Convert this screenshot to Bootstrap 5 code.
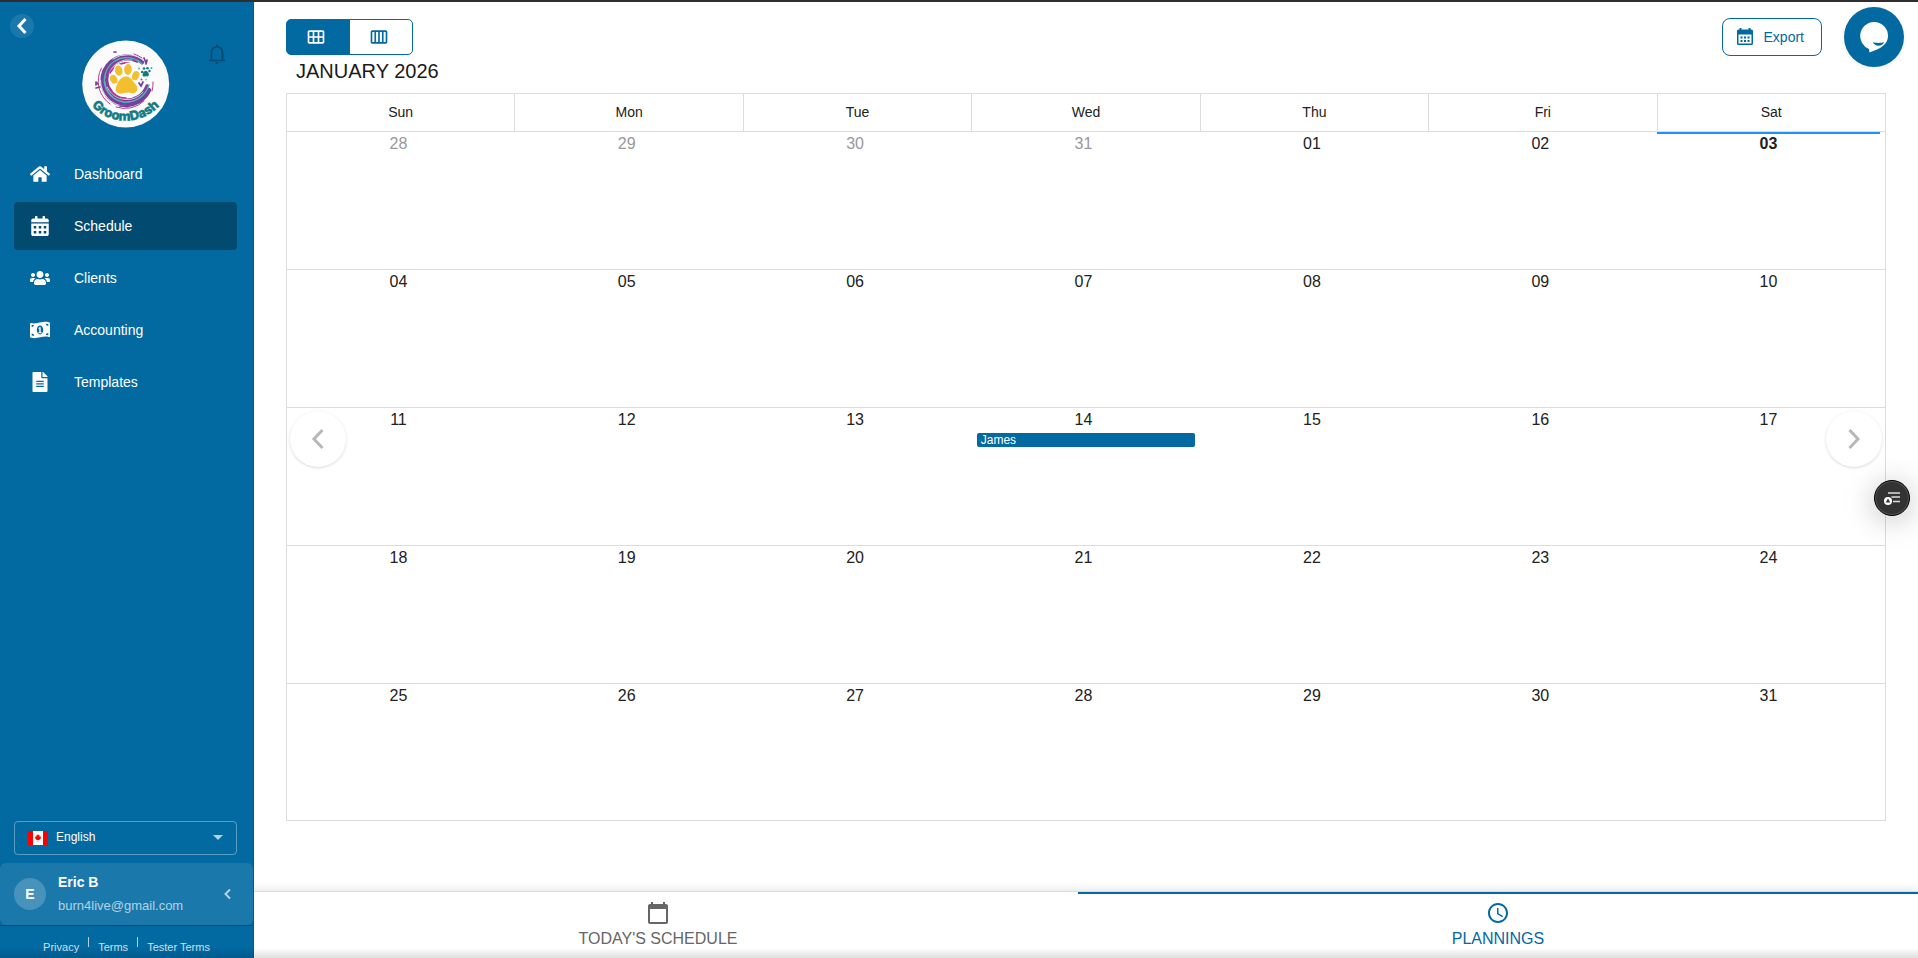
<!DOCTYPE html>
<html lang="en">
<head>
<meta charset="utf-8">
<meta name="viewport" content="width=device-width, initial-scale=1">
<title>GroomDash - Schedule</title>
<link href="https://cdn.jsdelivr.net/npm/bootstrap@5.3.0/dist/css/bootstrap.min.css" rel="stylesheet">
<style>
  :root { --brand: #0269a1; --brand-dark: #024a70; --line: #dcdcdc; }
  body { font-family: "Liberation Sans", Arial, sans-serif; font-size: 14px; line-height: 20px; color: #212121; border-top: 2px solid #302d30; }
  svg { display: block; }

  /* Sidebar */
  .side-panel { width: 254px; background: var(--brand); border-right: 1px solid #015a8b; color: #fff; z-index: 2; }
  .side-head { padding: 38px 1px 0 0; height: 148px; }
  .side-block { margin: 0 16px 0 14px; }
  .btn-collapse { left: 10px; top: 12px; width: 24px; height: 24px; background: rgba(255,255,255,.1); color: #fff; }
  .btn-bell { left: 205px; top: 40px; color: var(--brand-dark); }
  .side-link { height: 48px; padding: 0 16px; gap: 24px; border-radius: 4px; color: #fff; text-decoration: none; }
  .side-link:hover { color: #fff; }
  .side-link.active { background: var(--brand-dark); }
  .side-link svg { width: 20px; height: 20px; fill: currentColor; }
  .lang-box { height: 34px; padding: 0 12px 0 13px; border: 1px solid rgba(255,255,255,.35); border-radius: 4px; }
  .lang-box select { appearance: none; background: transparent; color: #fff; border: 0; font-size: 12px; padding: 0 0 2px; outline: 0; }
  .user-card { background: rgba(255,255,255,.1); border: 0; border-radius: 6px; color: #fff; padding: 0 16px 0 14px; height: 62px; gap: 12px; }
  .avatar { width: 32px; height: 32px; background: rgba(255,255,255,.2); }
  .user-mail { font-size: 13px; color: #b3d2e3; }
  .side-foot { border-top: 1px solid #014a72; height: 33px; padding-top: 11px; font-size: 11px; line-height: 20px; gap: 9px; }
  .side-foot a { color: #cce1ec; text-decoration: none; }
  .side-foot .rule { width: 1px; height: 10px; background: #b3d2e3; }

  /* Toolbar */
  .main-area { padding: 16px 32px 0; min-width: 0; }
  .view-btn { width: 64px; height: 36px; border: 1px solid var(--brand); color: var(--brand); border-radius: 5px; padding: 0 4px 0 0; }
  .view-btn.active { background: var(--brand); color: #fff; border-color: var(--brand); }
  .btn-export { height: 38px; padding: 0 17px 0 14px; gap: 11px; border: 1px solid var(--brand); border-radius: 8px; color: var(--brand); font-size: 14px; margin-right: 64px; }
  .month-title { font-size: 20px; line-height: 30px; font-weight: 400; margin: 0 0 7px; padding-left: 10px; color: #1a1a1a; }

  /* Calendar */
  .cal-grid { table-layout: fixed; border-collapse: collapse; border: 1px solid var(--line); }
  .cal-grid th { height: 38px; border: 1px solid var(--line); font-weight: 400; text-align: center; padding: 0 0 2px; }
  .cal-grid td { height: 138px; border-top: 1px solid var(--line); border-bottom: 1px solid var(--line); padding: 0 5px 0 0; vertical-align: top; }
  .cal-grid tr:last-child td { height: 137px; }
  .day-num { border-top: 2px solid transparent; font-size: 16px; line-height: 20px; text-align: center; }
  .day-num.other { color: #999; }
  .day-num.today { border-color: #1e90ff; font-weight: 700; }
  .event-bar { display: block; height: 14px; line-height: 14px; font-size: 12px; margin: 3px 0 0 5px; padding: 0 4px; border-radius: 2px; background: var(--brand); color: #fff; text-decoration: none; }
  .page-arrow { width: 56px; height: 56px; top: 318px; background: #fff; color: #b8b8b8; box-shadow: 0 1px 3px rgba(0,0,0,.15); border: 0; }
  .page-arrow.prev { left: 4px; }
  .page-arrow.next { right: 4px; }

  /* Bottom tabs */
  .tab-bar { margin: 0 -32px 0 -48px; height: 67px; border-top: 1px solid var(--line); box-shadow: 0 -2px 8px rgba(0,0,0,.1); background: #fff; }
  .tab-item { border: 0; border-top: 2px solid transparent; background: transparent; padding: 7px 0 0; font-size: 16px; line-height: 24px; color: #666; gap: 2px; }
  .tab-item.active { color: var(--brand); border-color: var(--brand); }
  .tab-item svg { width: 24px; height: 24px; fill: currentColor; }

  /* Floating widgets */
  .chat-btn { top: 7px; right: 14px; width: 60px; height: 60px; background: var(--brand); box-shadow: 0 1px 4px rgba(0,0,0,.08); }
  .reader-btn { top: 480px; right: 8px; width: 36px; height: 36px; background: #333; border: 1px solid #000; box-shadow: 0 4px 30px rgba(0,0,0,.25), inset 0 0 0 1px #555; }
  .edge-fade { height: 10px; background: linear-gradient(transparent, rgba(0,0,0,.13)); pointer-events: none; }
</style>
</head>
<body class="d-flex min-vh-100">

<aside class="side-panel d-flex flex-column flex-shrink-0 position-relative">
  <button class="btn-collapse position-absolute border-0 rounded-circle p-0 d-flex align-items-center justify-content-center" aria-label="Collapse menu">
    <svg width="24" height="24" fill="none" stroke="currentColor" stroke-width="3"><path d="M15.500 5L9 12l6.500 7"/></svg>
  </button>
  <button class="btn-bell position-absolute border-0 bg-transparent p-0" aria-label="Notifications">
    <svg width="24" height="24" fill="none" stroke="currentColor" stroke-width="1.600"><path d="M4 18.500h16M6.500 18V10.500a5.500 5.800 0 0 1 11 0V18M12 4.700V2.500"/><path d="M10 20.500h4c-.5 1.500-3.500 1.500-4 0z" fill="currentColor" stroke="none"/></svg>
  </button>
  <div class="side-head d-flex justify-content-center">
    <svg width="88" height="88" viewBox="0 0 88 88" role="img" aria-label="GroomDash logo">
      <circle cx="43.700" cy="44" r="43.500" fill="#fbfbfc"/>
      <g fill="none" stroke-linecap="round">
        <path d="M19.500 28A27.500 27.500 0 0 0 28 64M60 18A27 27 0 0 0 52 14M34 67A27.500 27.500 0 0 0 62 61M70 51A27 27 0 0 0 71 42" stroke="#c4388f" stroke-width="1"/>
        <path d="M60 22A24 24 0 0 0 21 36A24 24 0 0 0 42 64.500A25 25 0 0 0 67 50" stroke="#74429b" stroke-width="4.500"/>
        <path d="M55 21A21 21 0 0 0 25 36A21 21 0 0 0 41 60A22 22 0 0 0 65 46" stroke="#8a3d98" stroke-width="3.500"/>
        <path d="M62 21A25 25 0 0 0 31 19M18.500 40A26 26 0 0 0 44 66.500" stroke="#fbfbfc" stroke-width=".8"/>
        <path d="M60 24A22 22 0 0 0 23 35A22 22 0 0 0 41 62A24 24 0 0 0 67 45" stroke="#4fb2b6" stroke-width="1.400"/>
        <path d="M50 20A20 20 0 0 0 27 34M25 47A21 21 0 0 0 43 59.500A21 21 0 0 0 61 52" stroke="#b5dfe4" stroke-width=".9"/>
        <path d="M47 23A19 19 0 0 0 28 33M28 48A18 18 0 0 0 44 58" stroke="#bd3590" stroke-width="1.600"/>
        <path d="M62 18l2 5M65 20l-1 4M14 42l2 2M14 48l4-1M14 42v3M57 43l2 3 2-4M32 12l2 0M38 66l8 .6" stroke="#71409b" stroke-width="1.700"/>
      </g>
      <g fill="#fbfbfc" stroke="#fbfbfc" stroke-width="3">
        <ellipse cx="36.700" cy="30.700" rx="3.700" ry="5.200"/><ellipse cx="46" cy="29.500" rx="3.800" ry="5.400"/><ellipse cx="31.700" cy="39.300" rx="3.500" ry="4.600"/><ellipse cx="53.600" cy="35.700" rx="3.400" ry="4.700"/>
        <path d="M43 36.500c5-.8 7 3.500 9.500 6.500 3 3 4 6.500 1.500 9s-5 .5-8.500.5-7 2.500-10 .3-1.800-5.500-.5-8.300 3.500-7.300 8-8z"/>
        <circle cx="63.500" cy="32" r="3.500"/>
      </g>
      <g fill="#f3bf2e">
        <ellipse cx="36.700" cy="30.700" rx="3.700" ry="5.200" transform="rotate(-12 36.700 30.700)"/>
        <ellipse cx="46" cy="29.500" rx="3.800" ry="5.400" transform="rotate(5 46 29.500)"/>
        <ellipse cx="31.700" cy="39.300" rx="3.500" ry="4.600" transform="rotate(-28 31.700 39.300)"/>
        <ellipse cx="53.600" cy="35.700" rx="3.400" ry="4.700" transform="rotate(22 53.600 35.700)"/>
        <path d="M43 36.500c5-.8 7 3.500 9.500 6.500 3 3 4 6.500 1.500 9s-5 .5-8.500.5-7 2.500-10 .3-1.800-5.500-.5-8.300 3.500-7.300 8-8z"/>
      </g>
      <g fill="#127a83">
        <circle cx="60.200" cy="32" r="1.300"/><circle cx="62" cy="28.500" r="1.300"/><circle cx="65.500" cy="28.300" r="1.300"/><circle cx="67.500" cy="31" r="1.200"/>
        <path d="M63.500 30.800c2-.3 4 3 3.200 4.700s-2 .6-3 .8-2.500.6-3-.6 1-4.700 2.800-4.900z"/>
      </g>
      <g fill="#c4388f"><circle cx="59.500" cy="39.500" r="1"/><circle cx="43" cy="22.500" r=".8"/></g>
      <g fill="#2eb3a8"><circle cx="69.500" cy="28" r="1"/><circle cx="57" cy="28.500" r=".9"/><circle cx="64" cy="39.500" r=".7"/></g>
      <path id="logo-arc" d="M8 64A46 46 0 0 0 79 64" fill="none"/>
      <text font-family="Inter, sans-serif" font-size="13" font-weight="800" fill="#127a83" stroke="#127a83" stroke-width=".4" text-anchor="middle"><textPath href="#logo-arc" startOffset="50%">GroomDash</textPath></text>
    </svg>
  </div>

  <nav class="side-block d-flex flex-column gap-1">
    <a class="side-link d-flex align-items-center" href="#">
      <svg viewBox="0 0 576 512"><path d="M280.370 148.260L96 300.110V464a16 16 0 0 0 16 16l112.060-.29a16 16 0 0 0 15.920-16V368a16 16 0 0 1 16-16h64a16 16 0 0 1 16 16v95.640a16 16 0 0 0 16 16.050L464 480a16 16 0 0 0 16-16V300L295.670 148.260a12.190 12.190 0 0 0-15.300 0zM571.600 251.470L488 182.560V44.050a12 12 0 0 0-12-12h-56a12 12 0 0 0-12 12v72.610L318.470 43a48 48 0 0 0-61 0L4.340 251.470a12 12 0 0 0-1.600 16.900l25.500 31A12 12 0 0 0 45.150 301l235.220-193.740a12.190 12.190 0 0 1 15.300 0L530.900 301a12 12 0 0 0 16.900-1.600l25.500-31a12 12 0 0 0-1.700-16.930z"/></svg>
      <span>Dashboard</span>
    </a>
    <a class="side-link active d-flex align-items-center" href="#" aria-current="page">
      <svg viewBox="0 0 448 512"><path fill-rule="evenodd" d="M0 464c0 26.500 21.500 48 48 48h352c26.500 0 48-21.500 48-48V192H0zM64 256h64v64H64zM192 256h64v64h-64zM320 256h64v64h-64zM64 384h64v64H64zM192 384h64v64h-64zM320 384h64v64h-64zM400 64h-48V16c0-8.800-7.200-16-16-16h-32c-8.800 0-16 7.200-16 16v48H160V16c0-8.800-7.200-16-16-16h-32c-8.800 0-16 7.200-16 16v48H48C21.500 64 0 85.500 0 112v48h448v-48c0-26.500-21.500-48-48-48z"/></svg>
      <span>Schedule</span>
    </a>
    <a class="side-link d-flex align-items-center" href="#">
      <svg viewBox="0 0 640 512"><path d="M96 224c35.300 0 64-28.700 64-64s-28.700-64-64-64-64 28.700-64 64 28.700 64 64 64zm448 0c35.300 0 64-28.700 64-64s-28.700-64-64-64-64 28.700-64 64 28.700 64 64 64zm32 32h-64c-17.600 0-33.500 7.100-45.100 18.600 40.300 22.100 68.900 62 75.100 109.400h66c17.700 0 32-14.300 32-32v-32c0-35.300-28.700-64-64-64zm-256 0c61.900 0 112-50.100 112-112S381.900 32 320 32 208 82.100 208 144s50.100 112 112 112zm76.800 32h-8.300c-20.800 10-43.900 16-68.500 16s-47.600-6-68.500-16h-8.300C179.600 288 128 339.600 128 403.200V432c0 26.500 21.500 48 48 48h288c26.500 0 48-21.500 48-48v-28.800c0-63.600-51.600-115.200-115.200-115.200zm-223.700-13.400C161.500 263.100 145.600 256 128 256H64c-35.300 0-64 28.700-64 64v32c0 17.700 14.300 32 32 32h65.900c6.300-47.400 34.900-87.300 75.200-109.400z"/></svg>
      <span>Clients</span>
    </a>
    <a class="side-link d-flex align-items-center" href="#">
      <svg viewBox="0 0 20 20"><path fill-rule="evenodd" d="M0 3.800c0-.7.600-1 1.200-.8 5.800 1.800 11.500-2.600 17.800-.7.600.2 1 .6 1 1.200v12.700c0 .7-.6 1-1.200.8-5.800-1.800-11.500 2.600-17.800.7-.6-.2-1-.6-1-1.200zM10 5.600c-1.800 0-3.200 2-3.200 4.400s1.400 4.400 3.200 4.400 3.200-2 3.200-4.400-1.400-4.400-3.200-4.400zM1.700 5v2c1.200-.1 2.200-.8 2.500-1.800zM15.700 3.700c.2 1.300 1.300 2.100 2.600 2.100v-1.700zM1.700 13.500v1.900c.9.200 1.700.3 2.600.3-.1-1.200-1.200-2.200-2.600-2.200zM18.300 13c-1.300.1-2.400.9-2.500 2l2.500.2z"/><path d="M9.300 7.300h1.400V12h.8v1.200h-3V12h.8V8.800h-.8V7.900z"/></svg>
      <span>Accounting</span>
    </a>
    <a class="side-link d-flex align-items-center" href="#">
      <svg viewBox="0 0 384 512"><path fill-rule="evenodd" d="M224 136V0H24C10.700 0 0 10.700 0 24v464c0 13.300 10.700 24 24 24h336c13.300 0 24-10.700 24-24V160H248c-13.200 0-24-10.800-24-24zM96 224h192v32H96zM96 288h192v32H96zM96 352h192v32H96zM384 121.900v6.100H256V0h6.100c6.400 0 12.500 2.500 17 7l97.900 98c4.500 4.500 7 10.600 7 16.900z"/></svg>
      <span>Templates</span>
    </a>
  </nav>

  <div class="mt-auto">
    <div class="lang-box side-block d-flex align-items-center mb-2">
      <svg class="me-2" width="20" height="14" viewBox="0 0 20 14"><path fill="#fff" d="M0 0h20v14H0z"/><path fill="#f00" d="M0 0h5v14H0zM15 0h5v14h-5zM10 3l1 1.500.8-.3-.2 1.500 1.600-.2-.5 1 .5.500-1.700 1.500.2.500h-1.500V11h-.4V9H8.300l.2-.5L6.800 7l.5-.5-.5-1 1.600.2-.2-1.500.8.300z"/></svg>
      <select class="flex-grow-1" aria-label="Language"><option>English</option><option>Français</option></select>
      <svg width="12" height="6" fill="#b3d2e3"><path d="M1 0h10L6 5z"/></svg>
    </div>
    <button class="user-card w-100 d-flex align-items-center text-start">
      <span class="avatar rounded-circle d-flex align-items-center justify-content-center fw-bold">E</span>
      <span class="flex-grow-1 d-flex flex-column gap-1"><span class="fw-bold">Eric B</span><span class="user-mail">burn4live@gmail.com</span></span>
      <svg width="18" height="18" fill="none" stroke="#b3d2e3" stroke-width="2"><path d="M11 4.500L6.500 9l4.500 4.500"/></svg>
    </button>
    <div class="side-foot d-flex justify-content-center">
      <a href="#">Privacy</a><span class="rule"></span><a href="#">Terms</a><span class="rule"></span><a href="#">Tester Terms</a>
    </div>
  </div>
</aside>

<main class="main-area d-flex flex-column flex-grow-1">
  <div class="d-flex align-items-center justify-content-between">
    <div class="btn-group" role="group" aria-label="Calendar view">
      <button class="view-btn btn active d-flex align-items-center justify-content-center" aria-label="Month view">
        <svg width="20" height="20" viewBox="0 0 24 24" fill="currentColor"><path d="M20 4H4c-1.100 0-2 .9-2 2v12c0 1.100.9 2 2 2h16c1.100 0 2-.9 2-2V6c0-1.100-.9-2-2-2zM8 11H4V6h4v5zm6 0h-4V6h4v5zm6 0h-4V6h4v5zM8 18H4v-5h4v5zm6 0h-4v-5h4v5zm6 0h-4v-5h4v5z"/></svg>
      </button>
      <button class="view-btn btn d-flex align-items-center justify-content-center" aria-label="Week view">
        <svg width="20" height="20" viewBox="0 0 24 24" fill="currentColor"><path fill-rule="evenodd" d="M20 4H4c-1.100 0-2 .9-2 2v12c0 1.100.9 2 2 2h16c1.100 0 2-.9 2-2V6c0-1.100-.9-2-2-2zM13 6h2.500v12H13zM11 18H8.500V6H11zM4 6h2.500v12H4zM20 18h-2.500V6H20z"/></svg>
      </button>
    </div>
    <button class="btn btn-export d-flex align-items-center">
      <svg width="16" height="18" viewBox="0 0 16 18" fill="currentColor"><path fill-rule="evenodd" d="M2.500 0h2v1.500h7V0h2v1.500h1A1.500 1.500 0 0 1 16 3v12.500a1.500 1.500 0 0 1-1.500 1.500h-13A1.500 1.500 0 0 1 0 15.500V3a1.500 1.500 0 0 1 1.500-1.500h1zM1.500 6.500v9h13v-9z"/><path d="M3.500 8.500h2v2h-2zM7 8.500h2v2H7zM10.500 8.500h2v2h-2zM3.500 12h2v2h-2zM7 12h2v2H7zM10.500 12h2v2h-2z"/></svg>
      Export
    </button>
  </div>
  <h1 class="month-title">JANUARY 2026</h1>

  <div class="position-relative mb-5">
    <table class="cal-grid w-100">
      <thead><tr><th>Sun</th><th>Mon</th><th>Tue</th><th>Wed</th><th>Thu</th><th>Fri</th><th>Sat</th></tr></thead>
      <tbody>
        <tr><td><div class="day-num other">28</div></td><td><div class="day-num other">29</div></td><td><div class="day-num other">30</div></td><td><div class="day-num other">31</div></td><td><div class="day-num">01</div></td><td><div class="day-num">02</div></td><td><div class="day-num today">03</div></td></tr>
        <tr><td><div class="day-num">04</div></td><td><div class="day-num">05</div></td><td><div class="day-num">06</div></td><td><div class="day-num">07</div></td><td><div class="day-num">08</div></td><td><div class="day-num">09</div></td><td><div class="day-num">10</div></td></tr>
        <tr><td><div class="day-num">11</div></td><td><div class="day-num">12</div></td><td><div class="day-num">13</div></td><td><div class="day-num">14</div><a class="event-bar" href="#">James</a></td><td><div class="day-num">15</div></td><td><div class="day-num">16</div></td><td><div class="day-num">17</div></td></tr>
        <tr><td><div class="day-num">18</div></td><td><div class="day-num">19</div></td><td><div class="day-num">20</div></td><td><div class="day-num">21</div></td><td><div class="day-num">22</div></td><td><div class="day-num">23</div></td><td><div class="day-num">24</div></td></tr>
        <tr><td><div class="day-num">25</div></td><td><div class="day-num">26</div></td><td><div class="day-num">27</div></td><td><div class="day-num">28</div></td><td><div class="day-num">29</div></td><td><div class="day-num">30</div></td><td><div class="day-num">31</div></td></tr>
      </tbody>
    </table>
    <button class="page-arrow prev position-absolute rounded-circle p-0 d-flex align-items-center justify-content-center" aria-label="Previous month">
      <svg width="24" height="24" fill="none" stroke="currentColor" stroke-width="3"><path d="M16.500 3L8 12l8.500 9"/></svg>
    </button>
    <button class="page-arrow next position-absolute rounded-circle p-0 d-flex align-items-center justify-content-center" aria-label="Next month">
      <svg width="24" height="24" fill="none" stroke="currentColor" stroke-width="3"><path d="M7.500 3L16 12l-8.500 9"/></svg>
    </button>
  </div>

  <div class="tab-bar d-flex mt-auto">
    <button class="tab-item w-50 d-flex flex-column align-items-center">
      <svg viewBox="0 0 24 24"><path d="M20 3h-1V1h-2v2H7V1H5v2H4c-1.100 0-2 .9-2 2v16c0 1.100.9 2 2 2h16c1.100 0 2-.9 2-2V5c0-1.100-.9-2-2-2zm0 18H4V8h16v13z"/></svg>
      TODAY'S SCHEDULE
    </button>
    <button class="tab-item active w-50 d-flex flex-column align-items-center">
      <svg viewBox="0 0 24 24"><path d="M11.990 2C6.470 2 2 6.480 2 12s4.470 10 9.990 10C17.520 22 22 17.520 22 12S17.520 2 11.990 2zM12 20c-4.420 0-8-3.580-8-8s3.580-8 8-8 8 3.580 8 8-3.580 8-8 8zm.5-13H11v6l5.250 3.150.75-1.230-4.500-2.670z"/></svg>
      PLANNINGS
    </button>
  </div>
</main>

<button class="chat-btn position-fixed border-0 rounded-circle p-0 d-flex align-items-center justify-content-center" aria-label="Open chat">
  <svg width="30" height="32" viewBox="0 0 30 32"><path fill="#fff" d="M15 1a14 14 0 0 1 14 14c0 8-6 12-18.500 16.500l-.5-3.500A14 14 0 0 1 15 1z"/><path fill="#0269a1" d="M14 21c3 1.200 8 1.200 11 0-1.500 5-9.500 5-11 0z"/></svg>
</button>
<button class="reader-btn position-fixed rounded-circle p-0 d-flex align-items-center justify-content-center" aria-label="Reading tools">
  <svg width="18" height="16" viewBox="0 0 18 16"><path stroke="#ddd" stroke-width="1.500" d="M5 3h12M8.500 7H17M10 11.500h7"/><circle cx="5" cy="11" r="4" fill="#fff"/><path fill="#333" d="M5 8.500l2.300 4H2.700z"/></svg>
</button>
<div class="edge-fade fixed-bottom"></div>

<script src="https://cdn.jsdelivr.net/npm/bootstrap@5.3.0/dist/js/bootstrap.bundle.min.js"></script>
</body>
</html>
